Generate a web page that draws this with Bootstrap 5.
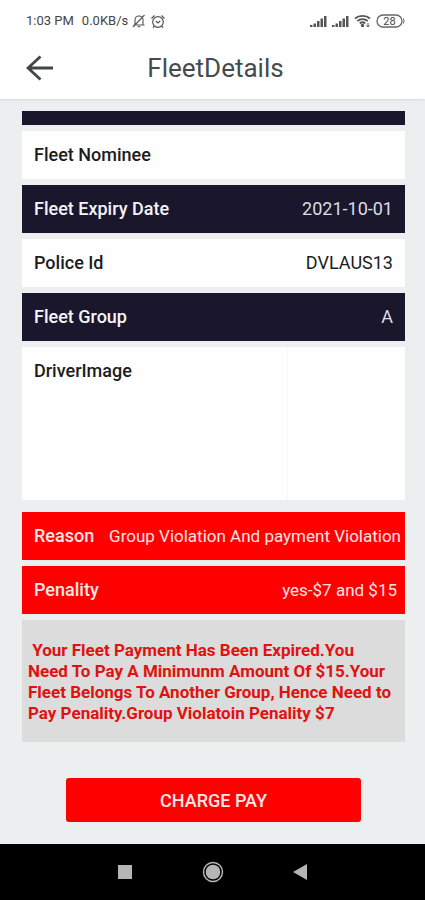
<!DOCTYPE html>
<html lang="en">
<head>
<meta charset="utf-8">
<meta name="viewport" content="width=device-width, initial-scale=1">
<title>FleetDetails</title>
<link href="https://cdn.jsdelivr.net/npm/bootstrap@5.3.0/dist/css/bootstrap.min.css" rel="stylesheet">
<style>
  body { font-family: Roboto, "Liberation Sans", sans-serif; background: #ebeff0; color: #1c1c1c; }
  svg { display: block; flex: none; }
  .status-line { height: 42px; padding: 0 20px 0 26px; font-size: 13px; color: #444; }
  .app-header { box-shadow: 0 1px 2px #d4d8d9; }
  .title-line { height: 57px; padding: 0 20px 6px 26px; }
  .app-title { font-size: 26px; line-height: 28px; color: #454b4d; }
  .side { width: 32px; }
  .fleet-main { padding: 12px 20px 22px 22px; }
  .fleet-list { gap: 6px; font-size: 18px; line-height: 24px; }
  .fleet-row { min-height: 48px; padding: 0 12px; background: #fefefe; }
  .fleet-row dt { font-weight: 500; }
  .fleet-dark { background: #1a172d; color: #f4f4f8; }
  .fleet-dark dd { color: #dcdce4; }
  .fleet-cut { min-height: 14px; }
  .fleet-alert { background: #f00; color: #ffe6e4; }
  .fleet-alert dd { font-size: 17px; }
  .fleet-reason { padding-right: 4px; }
  .fleet-penalty { padding-right: 8px; }
  .fleet-image { min-height: 153px; margin-bottom: 6px; padding: 0 0 0 12px; }
  .fleet-image dt { padding-top: 12px; }
  .photo-slot { width: 118px; border-left: 1px solid #f6f7f7; }
  .notice { margin-top: 6px; min-height: 122px; padding: 20px 0 18px 6px; background: #dcdcdc; color: #e01210; font-size: 17px; line-height: 21px; font-weight: 700; }
  .pay-wrap { padding: 36px 44px 0; }
  .btn-pay, .btn-pay:hover { height: 44px; background: #f00; color: #ffe9e8; border: 0; border-radius: 3px; font-size: 18px; font-weight: 500; }
  .system-nav { height: 56px; background: #000; padding: 0 112px; }
  .plain { background: none; border: 0; padding: 0; }
</style>
<script src="https://cdn.jsdelivr.net/npm/bootstrap@5.3.0/dist/js/bootstrap.bundle.min.js"></script>
</head>
<body>
<div class="d-flex flex-column min-vh-100">
  <header class="app-header bg-white">
    <div class="status-line d-flex align-items-center justify-content-between">
      <div class="d-flex align-items-center">
        <span class="me-2">1:03 PM</span><span>0.0KB/s</span>
        <svg class="ms-1" width="14" height="14" viewBox="0 0 14 14" fill="none" stroke="#555" stroke-width="1.1" aria-hidden="true"><path d="M3 10.5V6c0-2.5 1.4-4 4-4s4 1.500 4 4v4.500M1.500 11h11M5.500 12.700h3M1 13 12.500 1"/></svg>
        <svg class="ms-1" width="16" height="15" viewBox="0 0 16 15" fill="none" stroke="#555" stroke-width="1.200" aria-hidden="true"><circle cx="8" cy="8" r="5.300"/><path d="M1.500 4.500 4.500 1.500M11.500 1.500l3 3M5.800 7 8 9l2.200-2M4.200 12 3 13.800M11.800 12l1.200 1.800"/></svg>
      </div>
      <div class="d-flex align-items-center">
        <svg width="17" height="13" viewBox="0 0 17 13" fill="#555" aria-hidden="true"><path d="M0 10h2.500v2H0zM3.500 8.500H6V12H3.500zM7 6h2.500v6H7zM10.500 3.500H13V12h-2.500zM14 1h2.500v11H14z"/></svg>
        <svg class="ms-1" width="18" height="13" viewBox="0 0 18 13" fill="#555" aria-hidden="true"><path d="M1 10h2.500v2H1zM4.500 8.500H7V12H4.500zM8 6h2.500v6H8zM11.500 3.500H14V12h-2.500zM15 1h2.500v11H15z"/></svg>
        <svg class="ms-1" width="19" height="14" viewBox="0 0 19 14" fill="none" stroke="#555" stroke-width="1.900" aria-hidden="true"><path d="M2 4.500c4-3.500 11-3.500 15 0M4.300 7c3-2.500 7.400-2.500 10.400 0M6.800 9.400c1.500-1.200 3.900-1.200 5.400 0"/><circle cx="9.500" cy="11.500" r=".8" fill="#555"/><path d="M15 9v4M13.500 11.500 15 13l1.500-1.500" stroke-width="1"/></svg>
        <svg class="ms-1" width="29" height="14" viewBox="0 0 29 14" role="img" aria-label="Battery 28"><rect x="1" y="1" width="25" height="12" rx="6" fill="none" stroke="#666" stroke-width="1.300"/><path d="M27.500 4.500q1 2.500 0 5" fill="none" stroke="#666"/><text x="13.500" y="11" text-anchor="middle" font-size="11" font-family="Roboto, sans-serif" fill="#444">28</text></svg>
      </div>
    </div>
    <div class="title-line d-flex align-items-center justify-content-between">
      <button type="button" class="plain side" aria-label="Back"><svg width="28" height="26" viewBox="0 0 28 26" fill="none" stroke="#3e4648" stroke-width="2.800" aria-hidden="true"><path d="M14.500 1.500 2 13l12.500 11.500M2 13h25"/></svg></button>
      <h1 class="app-title m-0 fw-normal">FleetDetails</h1>
      <span class="side"></span>
    </div>
  </header>

  <main class="fleet-main flex-grow-1">
    <dl class="fleet-list d-flex flex-column m-0">
      <div class="fleet-row fleet-dark fleet-cut"></div>
      <div class="fleet-row d-flex align-items-center justify-content-between"><dt>Fleet Nominee</dt><dd class="m-0"></dd></div>
      <div class="fleet-row fleet-dark d-flex align-items-center justify-content-between"><dt>Fleet Expiry Date</dt><dd class="m-0">2021-10-01</dd></div>
      <div class="fleet-row d-flex align-items-center justify-content-between"><dt>Police Id</dt><dd class="m-0">DVLAUS13</dd></div>
      <div class="fleet-row fleet-dark d-flex align-items-center justify-content-between"><dt>Fleet Group</dt><dd class="m-0">A</dd></div>
      <div class="fleet-row fleet-image d-flex justify-content-between"><dt>DriverImage</dt><dd class="photo-slot m-0"></dd></div>
      <div class="fleet-row fleet-alert fleet-reason d-flex align-items-center justify-content-between"><dt>Reason</dt><dd class="m-0">Group Violation And payment Violation</dd></div>
      <div class="fleet-row fleet-alert fleet-penalty d-flex align-items-center justify-content-between"><dt>Penality</dt><dd class="m-0">yes-$7 and $15</dd></div>
    </dl>
    <p class="notice mb-0">&nbsp;Your Fleet Payment Has Been Expired.You<br>Need To Pay A Minimunm Amount Of $15.Your<br>Fleet Belongs To Another Group, Hence Need to<br>Pay Penality.Group Violatoin Penality $7</p>
    <div class="pay-wrap"><button type="button" class="btn btn-pay w-100">CHARGE PAY</button></div>
  </main>

  <nav class="system-nav d-flex align-items-center justify-content-between" aria-label="System">
    <button type="button" class="plain" aria-label="Recent apps"><svg width="26" height="24" viewBox="0 0 26 24" aria-hidden="true"><path d="M6 5h14v14H6z" fill="#b5b5b5"/></svg></button>
    <button type="button" class="plain" aria-label="Home"><svg width="24" height="24" viewBox="0 0 24 24" aria-hidden="true"><circle cx="12" cy="12" r="9.500" fill="none" stroke="#b5b5b5" stroke-width="1.500"/><circle cx="12" cy="12" r="7.300" fill="#b5b5b5"/></svg></button>
    <button type="button" class="plain" aria-label="Go back"><svg width="26" height="24" viewBox="0 0 26 24" aria-hidden="true"><path d="M20 4v16L6 12z" fill="#b5b5b5"/></svg></button>
  </nav>
</div>
</body>
</html>
